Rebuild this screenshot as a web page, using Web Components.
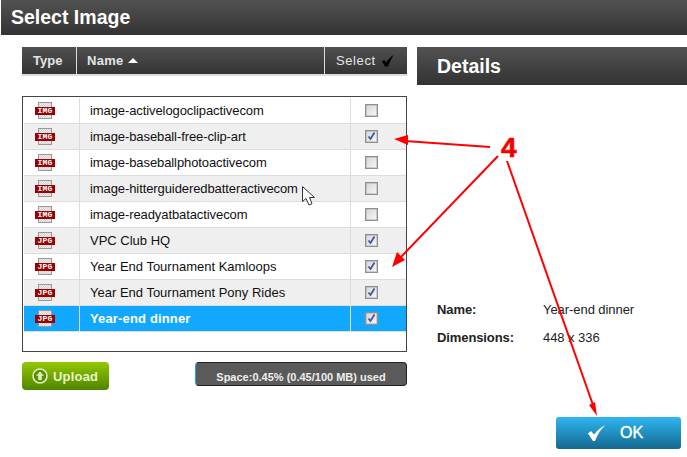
<!DOCTYPE html>
<html>
<head>
<meta charset="utf-8">
<title>Select Image</title>
<style>
  html, body { margin: 0; padding: 0; background: #fff; }
  body { font-family: "Liberation Sans", Arial, sans-serif; }
</style>
</head>
<body>
<select-dialog></select-dialog>
<script>
class TitleBar extends HTMLElement {
    constructor() {
        super();
        this.attachShadow({mode: 'open'});
        this.shadowRoot.innerHTML = `
        <style>
            :host {
                display: flex;
                align-items: center;
                box-sizing: border-box;
                height: var(--bar-height, 35px);
                padding-left: var(--bar-pad, 10px);
                background: linear-gradient(#525252, #333);
                color: #fff;
                font: bold 19.5px "Liberation Sans", Arial, sans-serif;
            }
        </style>
        <slot></slot>`;
    }
}

class ListHead extends HTMLElement {
    constructor() {
        super();
        this.attachShadow({mode: 'open'});
        this.shadowRoot.innerHTML = `
        <style>
            :host {
                display: grid;
                grid-template-columns: 54px 1fr 82px;
                column-gap: 1px;
                height: 29px;
                box-sizing: border-box;
                border-bottom: 2px solid #ddd;
                background: #ddd;
                font: bold 13px "Liberation Sans", Arial, sans-serif;
                color: #e4e4e4;
            }
            div {
                display: flex;
                align-items: center;
                background: linear-gradient(#505050, #343434);
            }
            .type { padding-left: 11px; }
            .name { padding-left: 10px; gap: 4px; letter-spacing: .3px; }
            .select { padding-left: 11px; gap: 6px; font-weight: normal; letter-spacing: .6px; }
            i {
                width: 0;
                height: 0;
                border: 5px solid transparent;
                border-top: 0;
                border-bottom: 5px solid #fff;
            }
        </style>
        <div class="type">Type</div>
        <div class="name">Name <i></i></div>
        <div class="select">Select
            <svg width="12" height="12" viewBox="0 0 12 12"><path d="M0 6.500L2.500 5 4 7.500C6 4.500 8.500 2 11.500 0 9.500 3.500 7.500 7 6 11.500H3z" fill="#000"/></svg>
        </div>`;
    }
}

class FileIcon extends HTMLElement {
    static get observedAttributes() { return ['kind']; }

    constructor() {
        super();
        this.attachShadow({mode: 'open'});
        this.shadowRoot.innerHTML = `
        <style>
            :host { display: block; position: relative; width: 20px; height: 18px; }
            .page {
                position: absolute;
                left: 3px;
                top: 0;
                width: 14px;
                height: 17px;
                box-sizing: border-box;
                border: 1px solid #999;
                background: repeating-conic-gradient(#d4d4d4 0 25%, #eee 0 50%) 0 0 / 2px 2px;
            }
            .band {
                position: absolute;
                left: 0;
                top: 5px;
                width: 20px;
                height: 8px;
                background: #9c0000;
                color: #fff;
                font: bold 8px/8px "Liberation Mono", monospace;
                text-align: center;
                letter-spacing: .2px;
            }
        </style>
        <div class="page"></div>
        <div class="band"></div>`;
    }

    attributeChangedCallback(name, oldValue, value) {
        this.shadowRoot.querySelector('.band').textContent = value;
    }
}

class CheckBox extends HTMLElement {
    static get observedAttributes() { return ['checked']; }

    constructor() {
        super();
        this.attachShadow({mode: 'open'});
        this.shadowRoot.innerHTML = `
        <style>
            :host {
                display: block;
                width: 13px;
                height: 13px;
                box-sizing: border-box;
                border: 1px solid #8f8f8f;
                box-shadow: inset 0 0 0 .5px #aaa;
                background: linear-gradient(135deg, #d4d4dc, #f8f8f8);
            }
            svg { display: block; }
        </style>
        <svg width="11" height="11" viewBox="0 0 11 11"></svg>`;
    }

    attributeChangedCallback() {
        this.shadowRoot.querySelector('svg').innerHTML =
            '<path d="M2.500 5.500l2 2.500L8.500 1.500" fill="none" stroke="#46589c" stroke-width="1.800"/>';
    }
}

class ImageRow extends HTMLElement {
    constructor() {
        super();
        this.attachShadow({mode: 'open'});
        this.shadowRoot.innerHTML = `
        <style>
            :host {
                display: grid;
                grid-template-columns: 56px 1fr 56px;
                height: 26px;
                box-sizing: border-box;
                border-bottom: 1px solid #ddd;
                background: #fff;
                color: #111;
                font: 13px "Liberation Sans", Arial, sans-serif;
            }
            :host(:nth-child(even)) { background: #efefef; }
            :host([kind="IMG"]) { letter-spacing: -.09px; }
            :host([selected]) {
                background: #12a8ff;
                color: #fff;
                font-weight: bold;
                letter-spacing: .15px;
            }
            div { display: flex; align-items: center; }
            .icon { padding-left: 11px; border-right: 1px solid #ddd; }
            .name { padding-left: 10px; }
            .check { border-left: 1px solid #ddd; padding-left: 14px; }
        </style>
        <div class="icon"><file-icon></file-icon></div>
        <div class="name"><slot></slot></div>
        <div class="check"><check-box></check-box></div>`;
    }

    connectedCallback() {
        this.shadowRoot.querySelector('file-icon').setAttribute('kind', this.getAttribute('kind'));
        if (this.hasAttribute('checked')) {
            this.shadowRoot.querySelector('check-box').setAttribute('checked', '');
        }
    }
}

class ImageList extends HTMLElement {
    constructor() {
        super();
        this.attachShadow({mode: 'open'});
        this.shadowRoot.innerHTML = `
        <style>
            :host {
                display: block;
                height: 256px;
                box-sizing: border-box;
                border: 1px solid #444;
                padding: 1px 0 0 1px;
            }
        </style>
        <slot></slot>`;
    }
}

class UploadButton extends HTMLElement {
    constructor() {
        super();
        this.attachShadow({mode: 'open'});
        this.shadowRoot.innerHTML = `
        <style>
            :host {
                display: flex;
                align-items: center;
                gap: 5px;
                box-sizing: border-box;
                width: 87px;
                height: 28px;
                padding-left: 10px;
                border-radius: 4px;
                background: linear-gradient(#92c800, #4f8500);
                color: #e9f5c8;
                font: bold 13px "Liberation Sans", Arial, sans-serif;
                letter-spacing: .2px;
            }
        </style>
        <svg width="16" height="16" viewBox="0 0 16 16">
            <circle cx="8" cy="8" r="7" fill="#5c8f00" stroke="#dfeec0" stroke-width="1.600"/>
            <path d="M8 3.500l4 4.200H9.800V12H6.200V7.700H4z" fill="#dfeec0"/>
        </svg>
        <slot></slot>`;
    }
}

class SpaceMeter extends HTMLElement {
    constructor() {
        super();
        this.attachShadow({mode: 'open'});
        this.shadowRoot.innerHTML = `
        <style>
            :host {
                display: flex;
                justify-content: center;
                align-items: flex-end;
                box-sizing: border-box;
                width: 212px;
                height: 24px;
                padding-bottom: 2px;
                border: 1px solid #222;
                border-left: 1px solid #12a8ff;
                border-radius: 4px;
                background: #5a5a5a;
                color: #eee;
                font: bold 11px "Liberation Sans", Arial, sans-serif;
            }
        </style>
        <slot></slot>`;
    }
}

class DetailRow extends HTMLElement {
    constructor() {
        super();
        this.attachShadow({mode: 'open'});
        this.shadowRoot.innerHTML = `
        <style>
            :host {
                display: grid;
                grid-template-columns: 106px 1fr;
                height: 28px;
                align-items: center;
                color: #222;
                font: 13px "Liberation Sans", Arial, sans-serif;
            }
            b { letter-spacing: -.1px; }
            span { letter-spacing: -.06px; }
        </style>
        <b></b>
        <span><slot></slot></span>`;
    }

    connectedCallback() {
        this.shadowRoot.querySelector('b').textContent = this.getAttribute('label');
    }
}

class OkButton extends HTMLElement {
    constructor() {
        super();
        this.attachShadow({mode: 'open'});
        this.shadowRoot.innerHTML = `
        <style>
            :host {
                display: flex;
                align-items: center;
                box-sizing: border-box;
                width: 125px;
                height: 32px;
                padding-left: 32px;
                gap: 14px;
                border-radius: 3px;
                background: linear-gradient(#2fb6f2, #14688f);
                color: #fff;
                font: 16px "Liberation Sans", Arial, sans-serif;
                -webkit-text-stroke: .4px #fff;
            }
        </style>
        <svg width="18" height="16" viewBox="0 0 18 16"><path d="M0 8.500l3-2.500 3 3.500C9 5.500 12.500 2.500 17.500 0 13 4 9.500 9.500 7 16H5z" fill="#fff"/></svg>
        <slot></slot>`;
    }
}

// red arrows, the big 4 and the mouse pointer lie over the dialog
class AnnotationLayer extends HTMLElement {
    constructor() {
        super();
        this.attachShadow({mode: 'open'});
        this.shadowRoot.innerHTML = `
        <style>
            :host { position: absolute; left: 0; top: 0; width: 687px; height: 457px; pointer-events: none; }
            svg { position: absolute; left: 0; top: 0; }
            .four {
                position: absolute;
                left: 501px;
                top: 133px;
                color: #f00000;
                font: bold 28px/30px "Liberation Sans", Arial, sans-serif;
                -webkit-text-stroke: .6px #f00000;
            }
        </style>
        <svg width="687" height="457" viewBox="0 0 687 457">
            <g fill="none" stroke="#f00" stroke-width="2">
                <path d="M490 147L405 141"/>
                <path d="M498 156L400 258"/>
                <path d="M507 161L593 405"/>
            </g>
            <g fill="#f00">
                <path d="M394 139L408 135V145z"/>
                <path d="M392 267L397 252 405 260z"/>
                <path d="M597 416L589 405 595 402z"/>
            </g>
            <path d="M302.500 186.500V201.500L306 198.500 309 205 312 203.800 309.500 197.500H314.500z" fill="#fff" stroke="#333"/>
        </svg>
        <div class="four">4</div>`;
    }
}

class SelectDialog extends HTMLElement {
    constructor() {
        super();
        this.attachShadow({mode: 'open'});
        this.shadowRoot.innerHTML = `
        <style>
            :host {
                display: block;
                position: relative;
                width: 687px;
                height: 457px;
                overflow: hidden;
            }
            .top { margin-left: 1px; --bar-pad: 10px; }
            .body {
                display: grid;
                grid-template-columns: 385px 1fr;
                column-gap: 10px;
                padding: 12px 0 0 22px;
            }
            .left { display: flex; flex-direction: column; }
            image-list { margin-top: 20px; }
            .foot {
                display: flex;
                justify-content: space-between;
                align-items: flex-start;
                margin-top: 10px;
            }
            .right { display: flex; flex-direction: column; }
            .details { --bar-height: 38px; --bar-pad: 20px; }
            .info { margin: 210px 0 0 20px; }
            ok-button { margin: 66px 6px 0 auto; }
        </style>
        <title-bar class="top">Select Image</title-bar>
        <div class="body">
            <div class="left">
                <list-head></list-head>
                <image-list>
                    <image-row kind="IMG">image-activelogoclipactivecom</image-row>
                    <image-row kind="IMG" checked>image-baseball-free-clip-art</image-row>
                    <image-row kind="IMG">image-baseballphotoactivecom</image-row>
                    <image-row kind="IMG">image-hitterguideredbatteractivecom</image-row>
                    <image-row kind="IMG">image-readyatbatactivecom</image-row>
                    <image-row kind="JPG" checked>VPC Club HQ</image-row>
                    <image-row kind="JPG" checked>Year End Tournament Kamloops</image-row>
                    <image-row kind="JPG" checked>Year End Tournament Pony Rides</image-row>
                    <image-row kind="JPG" checked selected>Year-end dinner</image-row>
                </image-list>
                <div class="foot">
                    <upload-button>Upload</upload-button>
                    <space-meter>Space:0.45% (0.45/100 MB) used</space-meter>
                </div>
            </div>
            <div class="right">
                <title-bar class="details">Details</title-bar>
                <div class="info">
                    <detail-row label="Name:">Year-end dinner</detail-row>
                    <detail-row label="Dimensions:">448 x 336</detail-row>
                </div>
                <ok-button>OK</ok-button>
            </div>
        </div>
        <annotation-layer></annotation-layer>`;
    }
}

customElements.define('title-bar', TitleBar);
customElements.define('list-head', ListHead);
customElements.define('file-icon', FileIcon);
customElements.define('check-box', CheckBox);
customElements.define('image-row', ImageRow);
customElements.define('image-list', ImageList);
customElements.define('upload-button', UploadButton);
customElements.define('space-meter', SpaceMeter);
customElements.define('detail-row', DetailRow);
customElements.define('ok-button', OkButton);
customElements.define('annotation-layer', AnnotationLayer);
customElements.define('select-dialog', SelectDialog);
</script>
</body>
</html>
